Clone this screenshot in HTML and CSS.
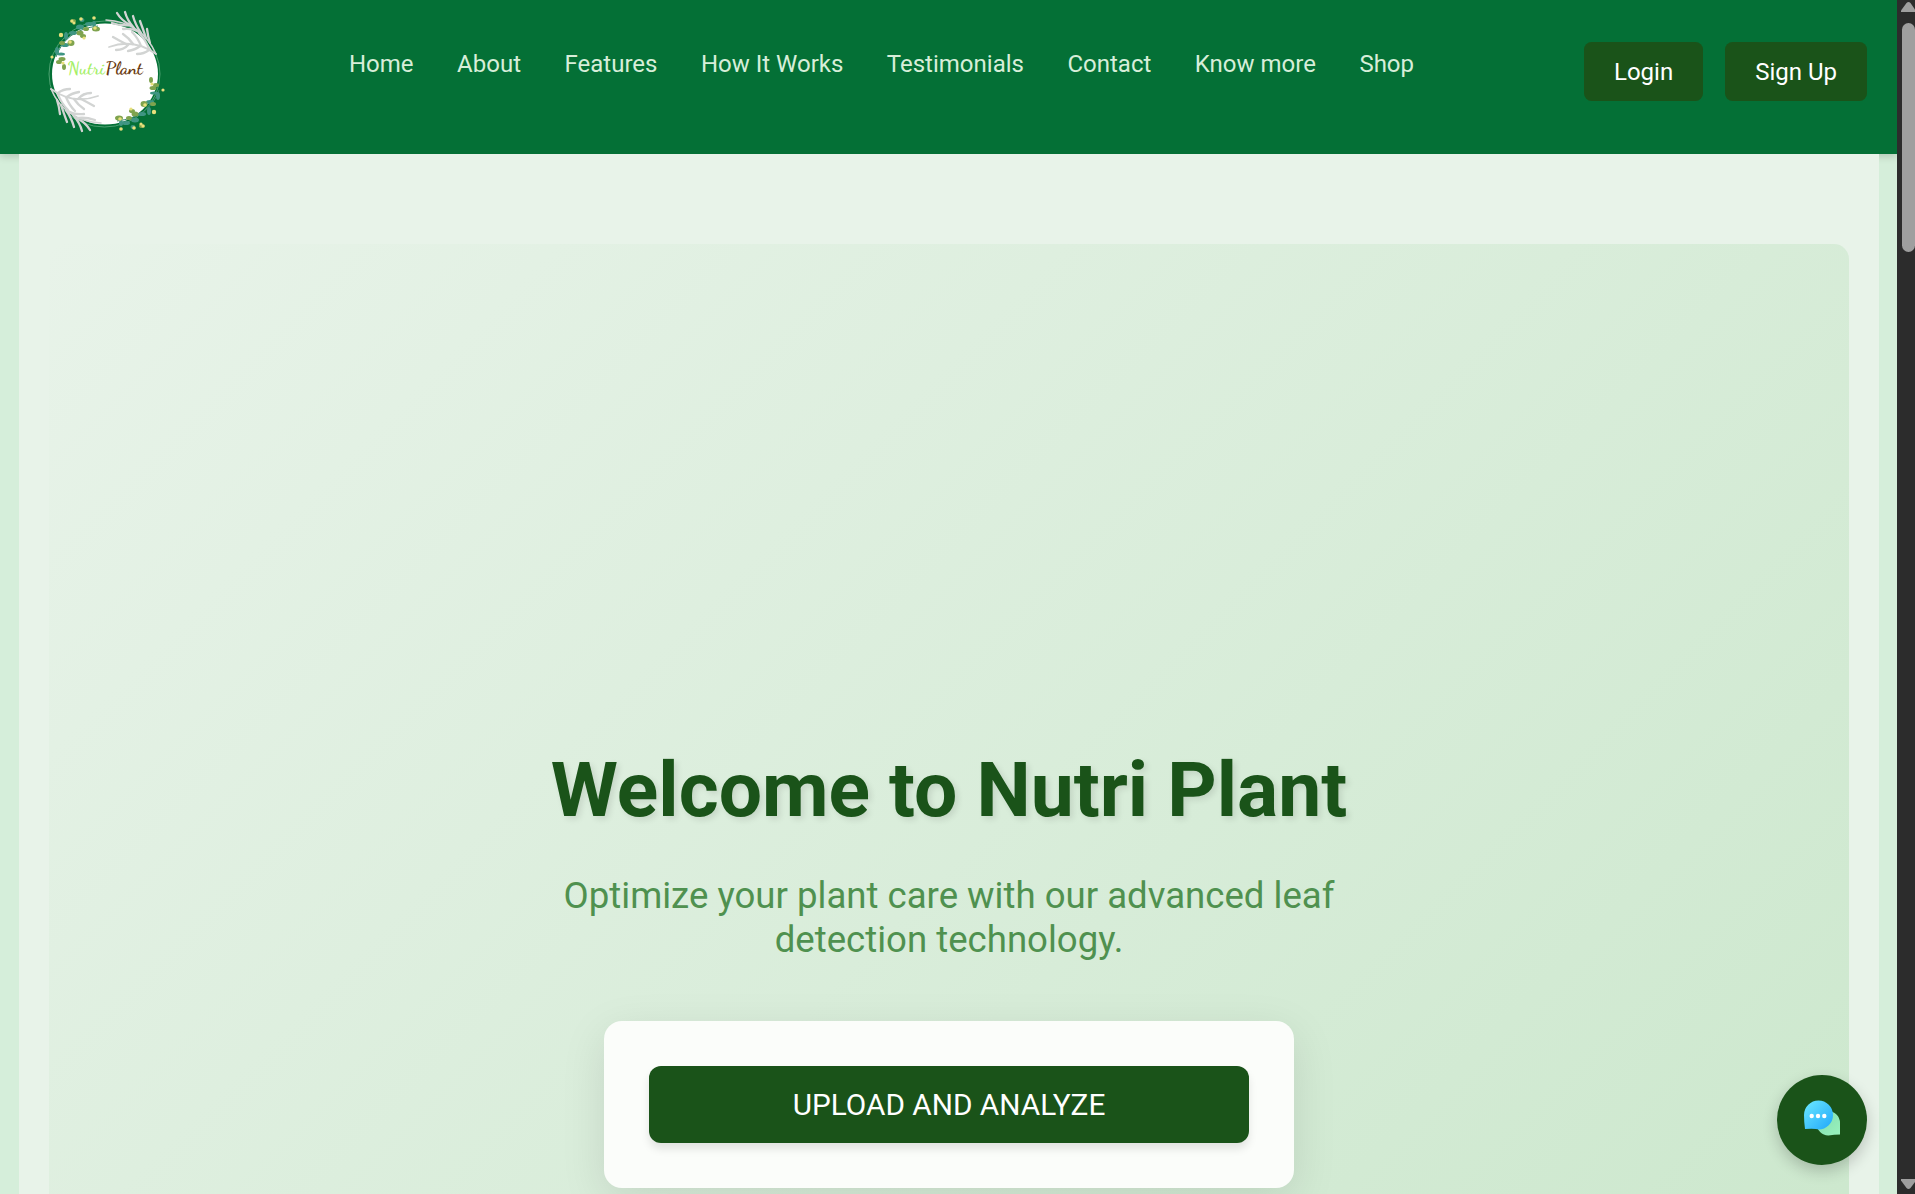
FILE: index.html
```html
<!DOCTYPE html>
<html lang="en">
<head>
<meta charset="utf-8">
<title>Nutri Plant</title>
<link rel="stylesheet" href="styles.css">
</head>
<body>
<div class="page">
  <div class="view">
    <header class="header">
      <a class="logo" href="#">
        <svg viewBox="0 0 150 150" width="150" height="150" aria-label="NutriPlant">
          <defs>
            <g id="frond" fill="none" stroke="#d2d4d3" stroke-width="2.300" stroke-linecap="round">
              <path d="M76 20Q112 22 126 54" stroke-width="1.500"/>
              <path d="M87 13Q91 20 100 25M95 12Q97 20 104 28M103 16Q105 24 111 33M110 21Q113 29 116 38M117 29Q118 37 120 43M82 23Q91 26 99 25M93 29Q103 28 109 32"/>
              <path d="M79 47Q104 38 126 54" stroke-width="1.800"/>
              <path d="M83 37Q90 41 96 44M93 34Q99 38 103 44M102 32Q108 38 111 46M109 33Q116 40 119 49M86 50Q94 50 99 44M98 51Q105 50 110 46M107 54Q114 54 119 50"/>
            </g>
            <g id="sprig">
              <path d="M26 57Q35 30 68 26" fill="none" stroke="#3d8b72" stroke-width="1"/>
              <g fill="#3f9583">
                <ellipse cx="43" cy="33" rx="4" ry="2"/><ellipse cx="50" cy="27" rx="4" ry="2.500"/><ellipse cx="52" cy="20" rx="2.500" ry="2"/><ellipse cx="59" cy="24" rx="4" ry="2"/><ellipse cx="36" cy="36" rx="2" ry="4"/><ellipse cx="35" cy="45" rx="4" ry="2"/><ellipse cx="27" cy="51" rx="2" ry="4"/><ellipse cx="31" cy="54" rx="4" ry="1.600"/><ellipse cx="64" cy="24" rx="2" ry="3"/>
              </g>
              <g fill="#7fa34e">
                <ellipse cx="41" cy="43" rx="3.500" ry="3"/><ellipse cx="50" cy="33" rx="3.500" ry="2.500"/><ellipse cx="56" cy="29" rx="3" ry="2"/><ellipse cx="32" cy="43" rx="3" ry="2"/><ellipse cx="34" cy="67" rx="2" ry="3"/><ellipse cx="29" cy="62" rx="3" ry="2"/><ellipse cx="66" cy="29" rx="4" ry="2.500"/><ellipse cx="43" cy="21" rx="3" ry="2"/><ellipse cx="32" cy="59" rx="3.500" ry="2"/><ellipse cx="53" cy="36" rx="3" ry="2"/>
              </g>
              <g fill="#e8e07c">
                <circle cx="31" cy="35" r="2.200"/><circle cx="40" cy="42" r="1.800"/><circle cx="54" cy="38" r="1.600"/><circle cx="65" cy="28" r="1.800"/><circle cx="44" cy="23" r="1.600"/><circle cx="64" cy="18" r="1.800"/><circle cx="22" cy="57" r="1.600"/><circle cx="33" cy="63" r="1.600"/><circle cx="51" cy="19" r="1.800"/><circle cx="42" cy="21" r="1.600"/>
              </g>
            </g>
          </defs>
          <ellipse cx="74.500" cy="74" rx="55.500" ry="53" fill="none" stroke="#5fae80" stroke-width=".8"/>
          <ellipse cx="75" cy="74" rx="53" ry="50.500" fill="#fff"/>
          <use href="#frond"/>
          <use href="#frond" transform="rotate(180 73.500 71.500)"/>
          <use href="#sprig"/>
          <use href="#sprig" transform="rotate(180 77.500 73.500)"/>
          <g transform="translate(-10.400 0) skewX(8)">
            <text class="script" x="38" y="74" textLength="37" lengthAdjust="spacingAndGlyphs" fill="#a4ef67">Nutri</text>
            <text class="script plant" x="76" y="74" textLength="37" lengthAdjust="spacingAndGlyphs" fill="#69390e">Plant</text>
          </g>
        </svg>
      </a>
      <nav class="nav">
        <a>Home</a><a>About</a><a>Features</a><a>How It Works</a><a>Testimonials</a><a>Contact</a><a>Know more</a><a>Shop</a>
      </nav>
      <div class="auth"><button>Login</button><button>Sign Up</button></div>
    </header>
    <main class="main">
      <section class="hero">
        <h1>Welcome to Nutri Plant</h1>
        <p>Optimize your plant care with our advanced leaf detection technology.</p>
        <div class="card"><button class="upload">UPLOAD AND ANALYZE</button></div>
      </section>
    </main>
  </div>
  <div class="scrollbar">
    <svg viewBox="0 0 18 1194" width="18" height="1194">
      <path d="M4 12V10.500L9.500 3Q11.500 1 13.500 3L18 9.500V12Z" fill="#9f9f9f"/>
      <rect x="5" y="23" width="13" height="229" rx="6.500" fill="#9f9f9f"/>
      <path d="M4 1179H18V1182L13.500 1188Q11.500 1190 9.500 1188L4 1180.500Z" fill="#9f9f9f"/>
    </svg>
  </div>
</div>
<button class="chat" aria-label="Chat">
  <svg viewBox="0 0 36 36" width="36" height="36">
    <defs>
      <linearGradient id="blue" x1="0" y1="0" x2="1" y2="1"><stop offset="0" stop-color="#6ce9ff"/><stop offset="1" stop-color="#20a7fa"/></linearGradient>
      <linearGradient id="mint" x1="0" y1="0" x2="1" y2="1"><stop offset="0" stop-color="#7fdcae"/><stop offset="1" stop-color="#9af2bd"/></linearGradient>
    </defs>
    <path d="M24 11A12 12 0 0 1 36 23V34.500Q30 34.500 24.500 35.500A11.500 12 0 0 1 24 11Z" fill="url(#mint)"/>
    <path d="M14.500.5A14.500 14.500 0 1 1 14.500 29.500Q12 28.500 1 29Q0 22 0 15A14.500 14.500 0 0 1 14.500.5Z" fill="url(#blue)"/>
    <g fill="#fff"><circle cx="7.700" cy="16" r="2.200"/><circle cx="14" cy="16" r="2.200"/><circle cx="20.300" cy="16" r="2.200"/></g>
  </svg>
</button>
</body>
</html>
```
FILE: styles.css
```css
* { box-sizing: border-box; }
body {
  margin: 0;
  height: 1194px;
  overflow: hidden;
  font-family: Roboto, sans-serif;
  background: #d5eeda;
}
button { border: 0; font-family: inherit; color: #fff; background: #1a5319; }
.page { display: flex; height: 1194px; overflow: hidden; }
.view { width: 1897px; height: 1194px; overflow: hidden; }
.header {
  display: flex;
  height: 154px;
  padding: 0 30px;
  background: #047036;
  box-shadow: 0 3px 7px rgba(0, 0, 0, .15);
}
.logo { width: 150px; height: 150px; }
.script { font: 600 18px "Dancing Script", cursive; }
.plant { font-weight: 700; }
.nav {
  display: flex;
  gap: 43.5px;
  margin-left: 169px;
  padding-top: 50px;
  font-size: 24px;
  line-height: 28px;
  color: #d7eed9;
  white-space: nowrap;
}
.auth { display: flex; gap: 22px; margin-left: auto; padding-top: 42px; }
.auth button { height: 59px; padding: 0 30px; border-radius: 7.5px; font-size: 24px; }
.main {
  position: relative;
  height: 1600px;
  margin: 0 18px 0 19px;
  padding: 90px 30px 0;
  background: #e8f3e9;
}
.hero {
  display: flex;
  flex-direction: column;
  align-items: center;
  height: 1450px;
  padding-top: 501px;
  border-radius: 15px;
  background: linear-gradient(135deg, #e8f3e9, #c8e6c9);
  text-align: center;
}
.hero h1 {
  margin: 0;
  font-size: 76.8px;
  line-height: 90px;
  color: #1a5319;
  text-shadow: 3px 3px 6px rgba(0, 0, 0, .1);
}
.hero p {
  width: 860px;
  margin: 39px 0 59px;
  font-size: 36.6px;
  line-height: 44px;
  color: #4f914f;
}
.card {
  width: 690px;
  height: 167px;
  padding: 45px;
  border-radius: 18px;
  background: #fbfdfa;
  box-shadow: 0 12px 45px rgba(0, 0, 0, .1);
}
.upload {
  width: 600px;
  height: 77px;
  padding: 0 0 1px;
  border-radius: 12px;
  font-size: 29.75px;
  box-shadow: 0 6px 9px rgba(0, 0, 0, .1);
}
.scrollbar { width: 18px; background: #2c2c2c; }
.scrollbar svg { display: block; }
.chat {
  position: absolute;
  left: 1777px;
  top: 1075px;
  display: grid;
  place-items: center;
  width: 90px;
  height: 90px;
  padding: 0 0 4px;
  border-radius: 50%;
  box-shadow: 0 6px 15px rgba(0, 0, 0, .2);
}
```
